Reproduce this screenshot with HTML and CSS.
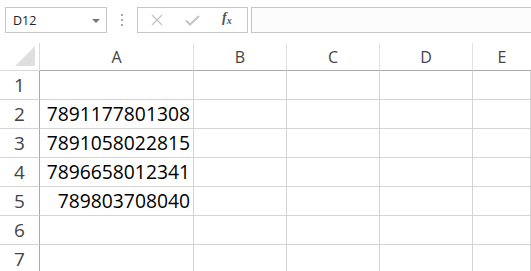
FILE: index.html
```html
<!DOCTYPE html>
<html>
<head>
<meta charset="utf-8">
<link rel="stylesheet" href="styles.css">
</head>
<body>
<div class="bar">
  <div class="namebox">
    <span class="name">D12</span>
    <svg class="caret" width="8" height="4" viewBox="0 0 8 4"><path d="M0 0H8L4 4Z" fill="#777"/></svg>
  </div>
  <div class="dots"><i></i><i></i><i></i></div>
  <div class="fbtns">
    <svg class="ic" width="12" height="12" viewBox="0 0 12 12"><path d="M1 1L11 11M11 1L1 11" stroke="#c4c4c4" stroke-width="1.3" fill="none"/></svg>
    <svg class="ic" width="15" height="11" viewBox="0 0 15 11"><path d="M1 5.5L5 9.5L14 1" stroke="#c4c4c4" stroke-width="2" fill="none"/></svg>
    <span class="fx">f<sub>x</sub></span>
  </div>
  <div class="formula"></div>
</div>
<div class="grid">
  <div class="corner"><svg width="20" height="20" viewBox="0 0 20 20"><path d="M20 0V20H0Z" fill="#dfdfdf"/></svg></div>
  <div class="ch">A</div>
  <div class="ch">B</div>
  <div class="ch">C</div>
  <div class="ch">D</div>
  <div class="ch last">E</div>

  <div class="rh">1</div><div class="c"></div><div class="c"></div><div class="c"></div><div class="c"></div><div class="c"></div>
  <div class="rh">2</div><div class="c num">7891177801308</div><div class="c"></div><div class="c"></div><div class="c"></div><div class="c"></div>
  <div class="rh">3</div><div class="c num">7891058022815</div><div class="c"></div><div class="c"></div><div class="c"></div><div class="c"></div>
  <div class="rh">4</div><div class="c num">7896658012341</div><div class="c"></div><div class="c"></div><div class="c"></div><div class="c"></div>
  <div class="rh">5</div><div class="c num">789803708040</div><div class="c"></div><div class="c"></div><div class="c"></div><div class="c"></div>
  <div class="rh">6</div><div class="c"></div><div class="c"></div><div class="c"></div><div class="c"></div><div class="c"></div>
  <div class="rh">7</div><div class="c"></div><div class="c"></div><div class="c"></div><div class="c"></div><div class="c"></div>
</div>
</body>
</html>
```
FILE: styles.css
```css
html, body {
  margin: 0;
  padding: 0;
  background: #fff;
  overflow: hidden;
}
body {
  width: 531px;
  height: 271px;
  font-family: "Open Sans", "DejaVu Sans", sans-serif;
}
.bar {
  display: flex;
  align-items: center;
  height: 43px;
  padding: 0 0 0 5px;
  box-sizing: border-box;
  padding-bottom: 10px;
  padding-top: 7px;
}
.namebox {
  box-sizing: border-box;
  width: 102px;
  height: 26px;
  border: 1px solid #c6c6c6;
  background: #fff;
  display: flex;
  align-items: center;
  justify-content: space-between;
  padding: 0 6px 0 7px;
}
.name {
  font-size: 12.5px;
  color: #222;
}
.caret { margin-top: 1px; }
.dots {
  width: 30px;
  display: flex;
  flex-direction: column;
  align-items: center;
  gap: 3px;
}
.dots i {
  display: block;
  width: 2px;
  height: 2px;
  background: #a8a8a8;
}
.fbtns {
  box-sizing: border-box;
  width: 111px;
  height: 26px;
  border: 1px solid #c6c6c6;
  display: flex;
  align-items: center;
  padding-left: 13px;
}
.fbtns .ic:first-child { margin-right: 22px; }
.fbtns .ic:nth-child(2) { margin-right: 22px; }
.fx {
  font-family: "Liberation Serif", serif;
  font-style: italic;
  font-size: 14px;
  color: #555;
  font-weight: bold;
  line-height: 1;
  margin-top: -3px;
}
.fx sub {
  font-size: 10px;
  vertical-align: -2px;
}
.formula {
  box-sizing: border-box;
  margin-left: 3px;
  flex: 1;
  height: 26px;
  border: 1px solid #c6c6c6;
  border-right: none;
  background: #fcfcfc;
}
.grid {
  display: grid;
  grid-template-columns: 40px 154px 93px 93px 93px 1fr;
  grid-template-rows: 28px repeat(7, 29px);
}
.grid > div {
  box-sizing: border-box;
}
.corner {
  border-right: 1px solid #dadada;
  border-bottom: 1px solid #dadada;
  display: flex;
  align-items: flex-end;
  justify-content: flex-end;
  padding: 0 4px 4px 0;
}
.corner svg { display: block; }
.ch {
  border-right: 1px solid #e1e1e1;
  border-bottom: 1px solid #ababab;
  text-align: center;
  font-size: 16px;
  line-height: 27px;
  color: #444;
  padding-top: 1px;
}
.ch.last { border-right: none; }
.rh {
  border-right: 1px solid #ababab;
  border-bottom: 1px solid #d4d4d4;
  text-align: center;
  font-size: 19px;
  line-height: 28px;
  color: #444;
}
.c {
  border-right: 1px solid #d4d4d4;
  border-bottom: 1px solid #d4d4d4;
  font-size: 19.3px;
  line-height: 28px;
  color: #000;
}
.c.num {
  text-align: right;
  padding-right: 3px;
}
```
